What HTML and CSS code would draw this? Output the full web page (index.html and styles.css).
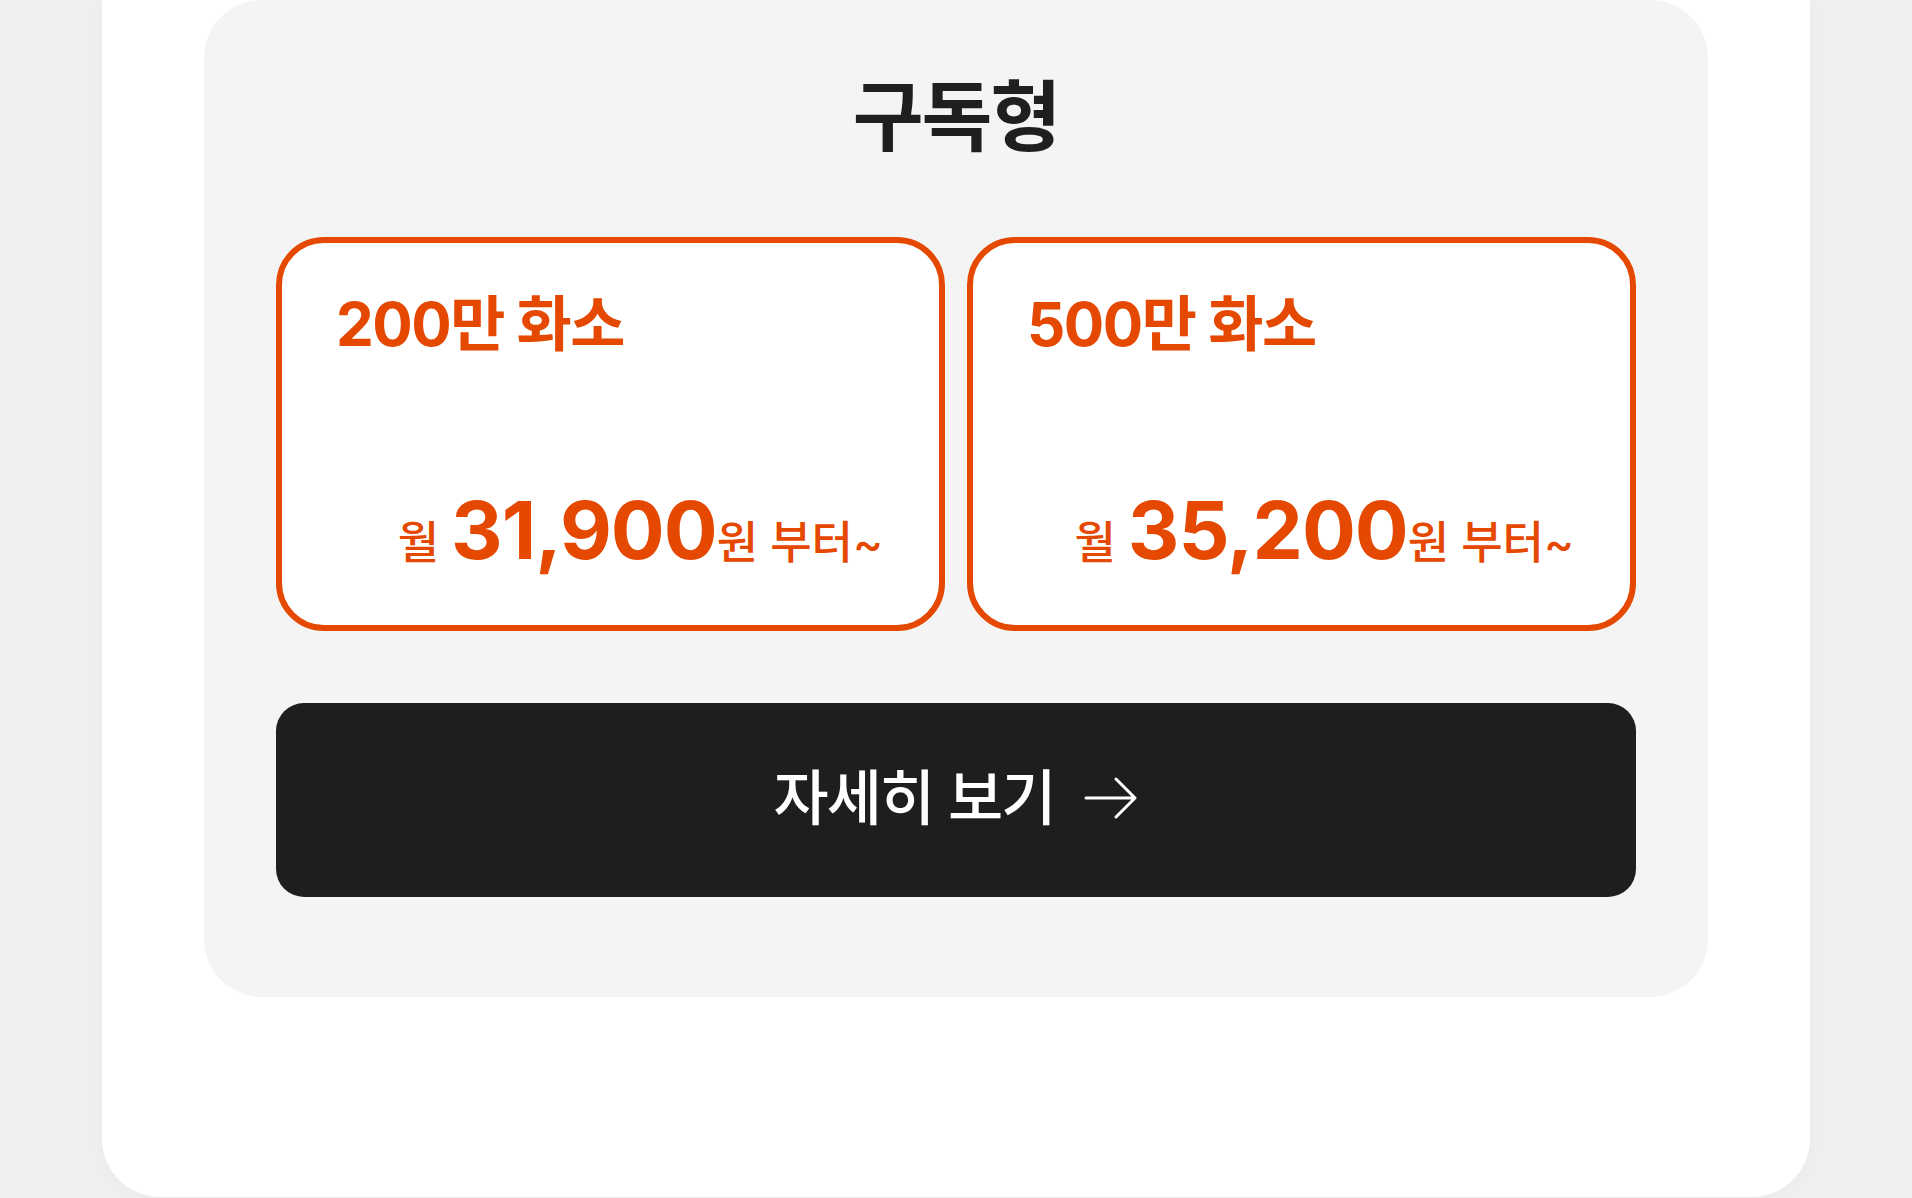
FILE: index.html
```html
<!DOCTYPE html>
<html lang="ko">
<head>
<meta charset="utf-8">
<title>구독형</title>
<link rel="stylesheet" href="styles.css">
</head>
<body>
<main class="panel">
  <section class="plan">
    <h2 class="plan-title">구독형</h2>
    <div class="options">
      <div class="option">
        <div class="option-name">200만 화소</div>
        <div class="option-price">
          <span class="unit">월 </span><span class="amount">31,900</span><span class="unit">원 부터~</span>
        </div>
      </div>
      <div class="option">
        <div class="option-name">500만 화소</div>
        <div class="option-price">
          <span class="unit">월 </span><span class="amount">35,200</span><span class="unit">원 부터~</span>
        </div>
      </div>
    </div>
    <a class="more-btn" href="#">
      <span class="more-label">자세히 보기</span>
      <svg class="more-arrow" width="54" height="44" viewBox="0 0 54 44" aria-hidden="true">
        <path d="M2 22H51M32 3L51 22L32 41" fill="none" stroke="#fff" stroke-width="3" stroke-linecap="round" stroke-linejoin="round"/>
      </svg>
    </a>
  </section>
</main>
</body>
</html>
```

FILE: styles.css
```css
* {
  box-sizing: border-box;
}

html,
body {
  margin: 0;
  padding: 0;
}

body {
  background: #f0f0f0;
  font-family: Inter, "Noto Sans CJK KR", sans-serif;
  height: 1198px;
  overflow: hidden;
}

.panel {
  display: block;
  width: 1708px;
  height: 1197px;
  margin: 0 auto;
  padding: 0 102px;
  background: #ffffff;
  border-radius: 0 0 58px 58px;
  box-shadow: 0 0 24px rgba(0, 0, 0, 0.04);
}

.plan {
  height: 997px;
  padding: 0 72px;
  background: #f4f4f4;
  border-radius: 58px;
}

.plan-title {
  margin: 0;
  padding-top: 73px;
  font-family: "Noto Sans CJK KR", sans-serif;
  font-size: 77px;
  font-weight: 700;
  line-height: 1;
  text-align: center;
  color: #1f1f1f;
  letter-spacing: -2px;
}

.options {
  display: grid;
  grid-template-columns: 1fr 1fr;
  gap: 22px;
  margin-top: 87px;
}

.option {
  height: 394px;
  display: flex;
  flex-direction: column;
  justify-content: space-between;
  padding: 51px 56px 55px 54px;
  background: #ffffff;
  border: 6px solid #e54800;
  border-radius: 48px;
  color: #e54800;
}

.option-name {
  font-size: 60px;
  font-weight: 700;
  line-height: 1;
  letter-spacing: -1.5px;
}

.option-price {
  display: flex;
  justify-content: flex-end;
  align-items: baseline;
  line-height: 1;
  white-space: pre;
}

.unit {
  font-size: 45px;
  font-weight: 500;
}

.amount {
  font-size: 80px;
  font-weight: 700;
  letter-spacing: -1px;
}

.more-btn {
  display: flex;
  align-items: center;
  justify-content: center;
  gap: 30px;
  height: 194px;
  margin-top: 72px;
  background: #1e1e1e;
  border-radius: 28px;
  color: #ffffff;
  text-decoration: none;
}

.more-label {
  margin-bottom: 12px;
  font-family: "Noto Sans CJK KR", sans-serif;
  font-size: 60px;
  font-weight: 500;
  line-height: 1;
  letter-spacing: -2px;
}

.more-arrow {
  display: block;
  margin-bottom: 4px;
}
```
